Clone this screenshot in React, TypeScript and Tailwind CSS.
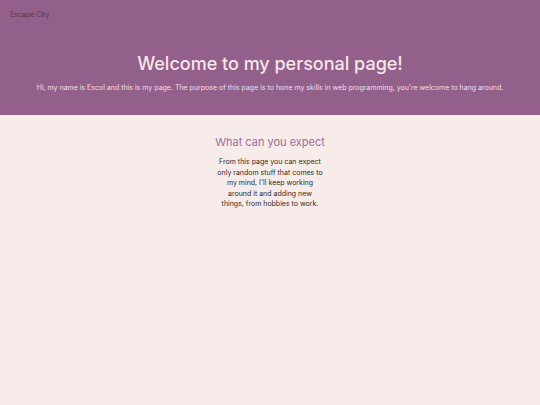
export default function App() {
  return (
    <div className="min-h-[405px] w-full bg-[#f7ece9] font-['Inter',sans-serif]">
      <header className="bg-[#93608b] pb-[22px]">
        <nav className="px-[10px] pt-[10px] text-[7px] text-[#5a3556]">
          <a>Escape City</a>
        </nav>
        <div className="mt-[30px] flex flex-col items-center text-center">
          <h1 className="text-[18px] font-medium leading-[26px] text-[#f8e6ea]">
            Welcome to my personal page!
          </h1>
          <p className="mt-[6px] text-[7px] text-[#f3dfe6]">
            Hi, my name is Escol and this is my page. The purpose of this page is to hone my skills in web
            programming, you're welcome to hang around.
          </p>
        </div>
      </header>
      <section className="flex flex-col items-center pt-[19px] text-center">
        <h2 className="text-[11px] leading-[16px] text-[#a56a9b]">What can you expect</h2>
        <p className="mt-[7px] w-[108px] text-[7px] leading-[10.5px] text-[#2f2a2b]">
          From this page you can expect only random stuff that comes to my mind, I'll keep working around it
          and adding new things, from hobbies to work.
        </p>
      </section>
    </div>
  );
}
